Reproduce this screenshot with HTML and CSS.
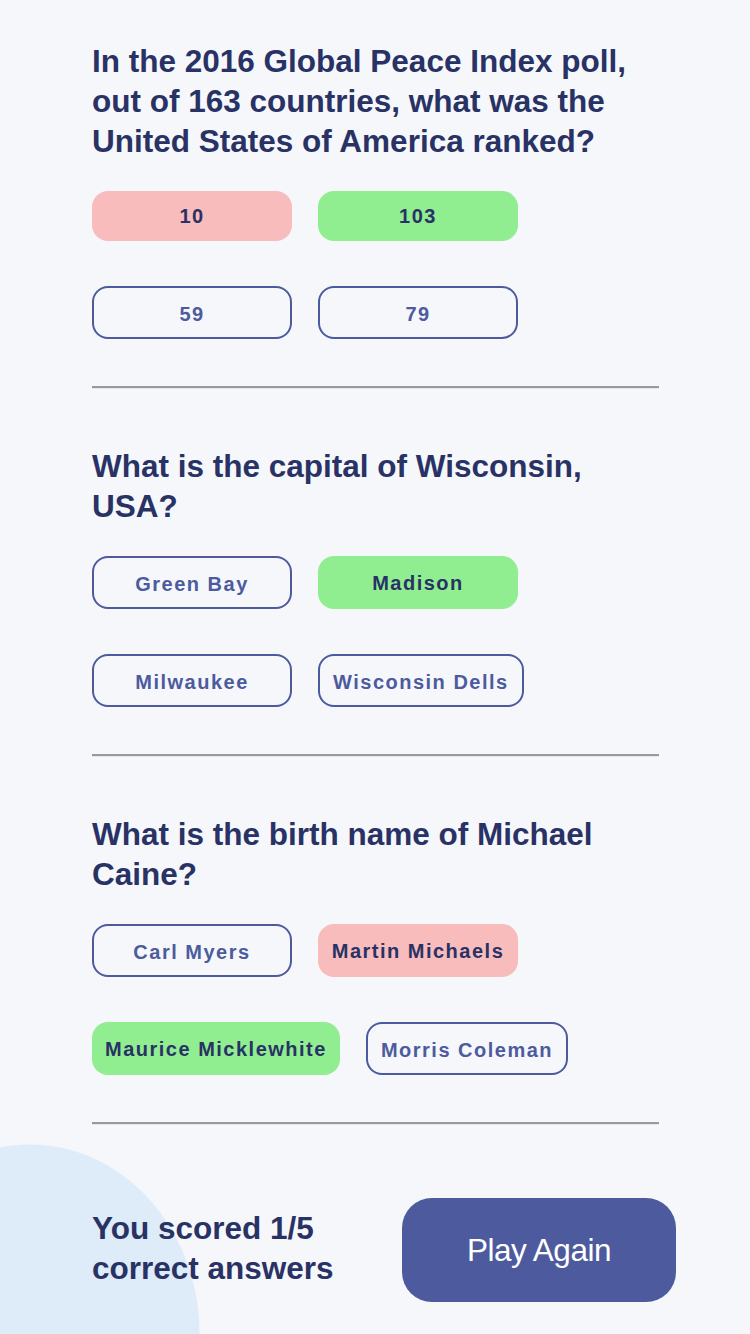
FILE: index.html
```html
<!DOCTYPE html>
<html lang="en">
<head>
<meta charset="utf-8">
<title>Quizzical</title>
<link rel="stylesheet" href="styles.css">
</head>
<body>
<main class="quiz">
  <section class="question">
    <h2 class="question__title">In the 2016 Global Peace Index poll, out of 163 countries, what was the United States of America ranked?</h2>
    <div class="answers">
      <div class="answer answer--wrong">10</div>
      <div class="answer answer--correct">103</div>
      <div class="answer answer--idle">59</div>
      <div class="answer answer--idle">79</div>
    </div>
  </section>
  <hr class="divider">
  <section class="question">
    <h2 class="question__title">What is the capital of Wisconsin, USA?</h2>
    <div class="answers">
      <div class="answer answer--idle">Green Bay</div>
      <div class="answer answer--correct">Madison</div>
      <div class="answer answer--idle">Milwaukee</div>
      <div class="answer answer--idle">Wisconsin Dells</div>
    </div>
  </section>
  <hr class="divider">
  <section class="question">
    <h2 class="question__title">What is the birth name of Michael Caine?</h2>
    <div class="answers">
      <div class="answer answer--idle">Carl Myers</div>
      <div class="answer answer--wrong">Martin Michaels</div>
      <div class="answer answer--correct">Maurice Micklewhite</div>
      <div class="answer answer--idle">Morris Coleman</div>
    </div>
  </section>
  <hr class="divider divider--last">
  <div class="result">
    <p class="result__text">You scored 1/5 correct answers</p>
    <button class="result__button">Play Again</button>
  </div>
</main>
</body>
</html>
```

FILE: styles.css
```css
html, body {
  margin: 0;
  padding: 0;
}

body {
  font-family: "Liberation Sans", Arial, sans-serif;
  color: #293264;
  width: 750px;
  height: 1334px;
  overflow: hidden;
  background:
    radial-gradient(170px 190px at 30px 100%, #DEEBF8 99.4%, rgba(222, 235, 248, 0) 100%) no-repeat,
    #F5F7FB;
}

.quiz {
  width: 567px;
  margin-left: 92px;
  padding-top: 41px;
}

.question__title {
  margin: 0 0 30px;
  font-size: 31.5px;
  line-height: 40px;
  font-weight: 700;
  color: #293264;
}

.answers {
  display: flex;
  flex-wrap: wrap;
  column-gap: 26px;
  row-gap: 45px;
}

.answer {
  box-sizing: border-box;
  min-width: 200px;
  min-height: 50px;
  padding: 0 13px;
  border-radius: 16px;
  display: flex;
  align-items: center;
  justify-content: center;
  font-size: 20px;
  font-weight: 700;
  letter-spacing: 1.5px;
  line-height: 24px;
}

.answer--idle {
  border: 2px solid #4D5B9E;
  color: #4D5B9E;
  min-height: 53px;
  padding-top: 2px;
}

.answer--correct {
  background: #90EE90;
  color: #293264;
}

.answer--wrong {
  background: #F8BCBC;
  color: #293264;
}

.divider {
  margin: 47px 0 57px;
  height: 0;
  border: 0;
  border-top: 2px solid #9A9A9A;
  border-bottom: 1px solid #E6E7EA;
}

.divider--last {
  margin-bottom: 73px;
}

.result {
  display: flex;
  align-items: center;
  gap: 66px;
  width: 600px;
}

.result__text {
  margin: 0;
  width: 244px;
  font-size: 31.5px;
  line-height: 40px;
  font-weight: 700;
  color: #293264;
  position: relative;
  top: -2px;
}

.result__button {
  box-sizing: border-box;
  width: 274px;
  height: 104px;
  border: 0;
  border-radius: 30px;
  background: #4D5B9E;
  color: #FFFFFF;
  font-family: "Liberation Sans", Arial, sans-serif;
  font-size: 31.5px;
  letter-spacing: -0.5px;
  font-weight: 400;
  padding: 0;
}
```
